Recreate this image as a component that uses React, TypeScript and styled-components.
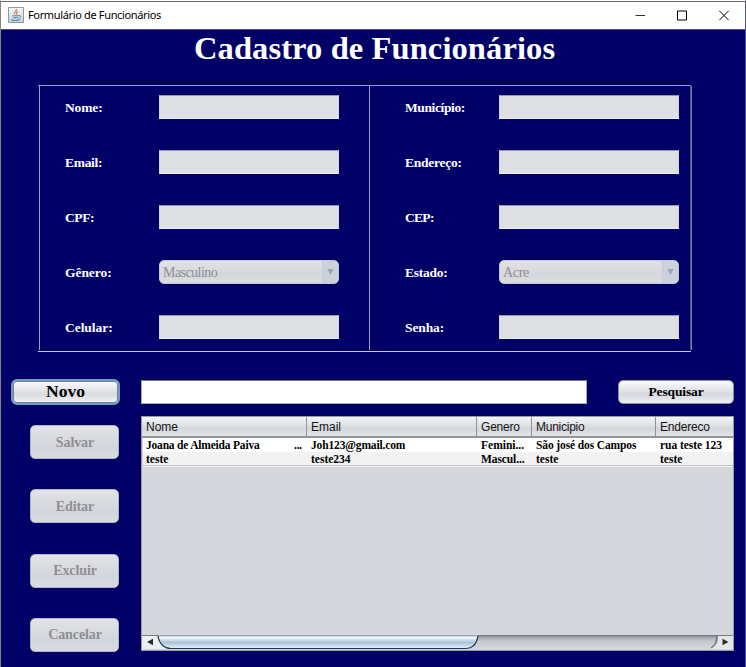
import React from "react";
import styled, { createGlobalStyle } from "styled-components";

const Global = createGlobalStyle`
  * { box-sizing: border-box; }
  body { margin: 0; background: #000066; overflow: hidden; }
`;

const serif = `"Liberation Serif", "Times New Roman", serif`;
const sans = `"Liberation Sans", Arial, sans-serif`;

const Window = styled.div`
  width: 746px;
  height: 667px;
  display: flex;
  flex-direction: column;
  background: #000066;
  border-left: 1px solid #85857f;
  border-right: 1px solid #55558c;
  border-top: 1px solid #fdfdfd;
  overflow: hidden;
`;

const TitleBar = styled.header`
  flex: none;
  height: 29px;
  display: flex;
  align-items: center;
  padding: 0 0 1px 7px;
  background: #fff;
  border-top: 1px solid #686868;
  border-bottom: 1px solid #505080;
`;

const Caption = styled.span`
  flex: 1;
  margin-left: 4px;
  font: 11px/16px "Noto Sans", sans-serif;
  letter-spacing: -0.35px;
  color: #000;
  white-space: nowrap;
`;

const WindowControls = styled.div`
  display: flex;
  width: 124px;
  height: 26px;
`;

const Heading = styled.h1`
  flex: none;
  margin: 0;
  height: 55px;
  padding-left: 193px;
  font: bold 32.5px/36px ${serif};
  letter-spacing: 0.1px;
  color: #fff;
  white-space: nowrap;
`;

const FormFrame = styled.section`
  flex: none;
  margin-left: 37px;
  width: 654px;
  height: 267px;
  display: flex;
  flex-direction: column;
`;

const Rule = styled.div<{ $color: string }>`
  flex: none;
  height: 1px;
  width: 653px;
  background: ${(p) => p.$color};
`;

const Columns = styled.div`
  display: flex;
  height: 265px;
  margin-left: 1px;
`;

const Column = styled.div<{ $width: number; $pad: number }>`
  width: ${(p) => p.$width}px;
  height: 264px;
  border-left: 1px solid #9c9cc0;
  padding: 9px 0 0 ${(p) => p.$pad}px;
  display: flex;
  flex-direction: column;
  gap: 31px;
`;

const EndRule = styled.div`
  width: 2px;
  height: 264px;
  background: linear-gradient(90deg, #50508a 50%, #7878a4 50%);
`;

const FieldRow = styled.label`
  display: grid;
  grid-template-columns: 94px 180px;
  height: 24px;
  align-items: center;
`;

const Label = styled.span<{ $spacing?: number }>`
  font: bold 13.5px/22px ${serif};
  padding-top: 2px;
  letter-spacing: ${(p) => p.$spacing ?? 0}px;
  color: #fff;
  white-space: nowrap;
`;

const Input = styled.input`
  width: 180px;
  height: 24px;
  margin: 0;
  padding: 0 5px;
  outline: 0;
  border: 1px solid #d2d3d9;
  border-top-color: #9698a5;
  border-bottom-color: #f0f0f2;
  border-radius: 0;
  background: #dedfe3;
`;

const Combo = styled.div`
  width: 180px;
  height: 24px;
  display: flex;
  border: 1px solid #c6c8d0;
  border-radius: 5px;
  background: linear-gradient(#e2e3e7, #d5d7dc 60%, #dcdde1);
  overflow: hidden;
  font: 14px/23px ${serif};
  color: #8e8f94;
`;

const ComboValue = styled.span<{ $spacing: number }>`
  flex: 1;
  padding-left: 3px;
  letter-spacing: ${(p) => p.$spacing}px;
`;

const ComboArrow = styled.span`
  width: 16px;
  display: flex;
  align-items: center;
  justify-content: center;
  background: #ccd2dd;
  border-left: 1px solid #c7cbd5;
`;

const Lower = styled.main`
  display: grid;
  grid-template-columns: 109px 593px;
  column-gap: 21px;
  padding: 27px 0 0 10px;
`;

const Actions = styled.nav`
  display: flex;
  flex-direction: column;
  align-items: flex-end;
`;

const Button = styled.button`
  height: 34px;
  width: 89px;
  margin: 0 1px 30.25px 0;
  padding: 1px 0 0 1px;
  border: 1px solid #b4b7c0;
  border-radius: 5px;
  background: linear-gradient(#e2e3e7, #d5d6dc 65%, #dadbe0);
  font: bold 14px/30px ${serif};
  letter-spacing: -0.1px;
  color: #8e8f94;
`;

const NewButton = styled(Button)`
  width: 109px;
  height: 26px;
  margin: 0 0 20px;
  padding: 0 0 2px;
  border: 2px solid #6e9cc4;
  border-radius: 6px;
  background: linear-gradient(#fafafb, #e6e7ea 40%, #d8dae0 60%, #f2f3f5);
  box-shadow: inset 0 0 0 1px #7c8190;
  font: bold 17.5px/20px ${serif};
  letter-spacing: 0;
  color: #000;
`;

const SearchButton = styled(Button)`
  width: 116px;
  height: 24px;
  margin: 0;
  padding: 0;
  border-color: #8f919b;
  background: linear-gradient(#fafafb, #e4e5e9 40%, #d6d8df 60%, #eff0f3);
  font: bold 13.5px/22px ${serif};
  letter-spacing: -0.12px;
  color: #000;
`;

const SearchBar = styled.div`
  display: flex;
  justify-content: space-between;
  margin: 1px 0 12px;
`;

const SearchInput = styled(Input)`
  width: 446px;
  background: #fff;
  border-color: #a9aab4;
  border-top-color: #707080;
`;

const TablePane = styled.div`
  width: 593px;
  height: 235px;
  border: 1px solid #9799a5;
  background: #d6d7dc;
  display: flex;
  flex-direction: column;
`;

const tracks = "165px 170px 55px 124px 77px";

const HeaderRow = styled.div`
  flex: none;
  display: grid;
  grid-template-columns: ${tracks};
  height: 21px;
  background: linear-gradient(#f4f5f7, #dfe0e4 45%, #d5d6db 60%, #e3e4e8);
  border-bottom: 2px solid #9295a0;
`;

const HeaderCell = styled.div<{ $last?: boolean; $spacing: number }>`
  padding-left: 4px;
  font: 12px/20px ${sans};
  letter-spacing: ${(p) => p.$spacing}px;
  color: #141414;
  border-right: ${(p) => (p.$last ? "0" : "1px solid #8e909c")};
  white-space: nowrap;
`;

const DataRow = styled.div<{ $alt?: boolean }>`
  flex: none;
  display: grid;
  grid-template-columns: ${tracks};
  height: ${(p) => (p.$alt ? 13 : 14)}px;
  margin-left: 1px;
  background: ${(p) => (p.$alt ? "#f2f2f2" : "#fff")};
`;

const Cell = styled.div<{ $spacing?: number }>`
  display: flex;
  justify-content: space-between;
  padding: 0 6px 0 3px;
  font: bold 11.5px/14px ${serif};
  letter-spacing: ${(p) => p.$spacing ?? 0}px;
  color: #000;
  white-space: pre;
`;

const TableEnd = styled.div`
  height: 2px;
  background: linear-gradient(#c2c3c8 50%, #f5f5f7 50%);
`;

const ScrollBar = styled.div`
  margin-top: auto;
  height: 15px;
  display: flex;
  background: linear-gradient(#6c6e77, #a6a7ae 15%, #c6c7cc 40%, #d8d9de);
`;

const fields: [string, string, number][][] = [
  [["Nome:", "", -0.15], ["Email:", "", -0.3], ["CPF:", "", -0.4], ["Gênero:", "Masculino", -0.05], ["Celular:", "", -0.05]],
  [["Município:", "", -0.38], ["Endereço:", "", -0.25], ["CEP:", "", -0.7], ["Estado:", "Acre", -0.25], ["Senha:", "", -0.1]],
];

const headers: [string, number][] = [
  ["Nome", 0],
  ["Email", 0],
  ["Genero", -0.2],
  ["Municipio", -0.25],
  ["Endereco", -0.2],
];

const JavaIcon = () => (
  <svg width="16" height="16" viewBox="0 0 16 16" fill="none">
    <defs>
      <linearGradient id="tile" x1="0" y1="0" x2="0" y2="1">
        <stop stopColor="#f6f8fa" />
        <stop offset="1" stopColor="#c3d0dc" />
      </linearGradient>
    </defs>
    <path d="M.5.5h15v15H.5z" fill="url(#tile)" stroke="#8c9aa8" />
    <path d="M8.3 2c1.2 2.2-3 2.5-1.6 5M9.8 4.2C7.8 5.2 9.4 6.2 8.3 7.6" stroke="#e07830" strokeWidth="1.2" />
    <path d="M4.500 8.800h6M5.200 10.800h4.600M3.200 12.800c2 1 6.500.9 9-.4M10.600 8.600c2.600-.7 2.600 1.700.2 2.200" stroke="#4d7da7" />
  </svg>
);

export default function App() {
  return (
    <>
      <Global />
      <Window>
        <TitleBar>
          <JavaIcon />
          <Caption>Formulário de Funcionários</Caption>
          <WindowControls>
            <svg width="124" height="26" fill="none" stroke="#000">
              <path d="M14.500 13.500h9.500" stroke="#333" />
              <path d="M56.500 9h9v9h-9z" />
              <path d="M98.300 8.800l9.400 9.400M107.700 8.800l-9.400 9.400" />
            </svg>
          </WindowControls>
        </TitleBar>
        <Heading>Cadastro de Funcionários</Heading>
        <FormFrame>
          <Rule $color="#9c9cb8" />
          <Columns>
            {fields.map((column, i) => (
              <Column key={i} $width={i ? 321 : 330} $pad={i ? 35 : 25}>
                {column.map(([label, value, spacing]) => (
                  <FieldRow key={label}>
                    <Label $spacing={spacing}>{label}</Label>
                    {value ? (
                      <Combo>
                        <ComboValue $spacing={value === "Acre" ? -0.3 : -0.55}>{value}</ComboValue>
                        <ComboArrow>
                          <svg width="7" height="6" fill="#9ea4b0">
                            <path d="M.3 0h6.4L3.5 6z" />
                          </svg>
                        </ComboArrow>
                      </Combo>
                    ) : (
                      <Input disabled />
                    )}
                  </FieldRow>
                ))}
              </Column>
            ))}
            <EndRule />
          </Columns>
          <Rule $color="#c8c8d8" />
        </FormFrame>
        <Lower>
          <Actions>
            <NewButton>Novo</NewButton>
            <Button disabled>Salvar</Button>
            <Button disabled>Editar</Button>
            <Button disabled>Excluir</Button>
            <Button disabled>Cancelar</Button>
          </Actions>
          <div>
            <SearchBar>
              <SearchInput />
              <SearchButton>Pesquisar</SearchButton>
            </SearchBar>
            <TablePane>
              <HeaderRow>
                {headers.map(([name, spacing], i) => (
                  <HeaderCell key={name} $last={i === 4} $spacing={spacing}>{name}</HeaderCell>
                ))}
              </HeaderRow>
              <DataRow>
                <Cell $spacing={-0.2}><span>Joana de Almeida Paiva</span><span>...</span></Cell>
                <Cell $spacing={-0.15}>Joh123@gmail.com</Cell>
                <Cell>Femini...</Cell>
                <Cell $spacing={-0.12}>São josé dos Campos</Cell>
                <Cell $spacing={-0.05}>rua teste 123</Cell>
              </DataRow>
              <DataRow $alt>
                <Cell>teste</Cell>
                <Cell>teste234</Cell>
                <Cell $spacing={-0.1}>Mascul...</Cell>
                <Cell>teste</Cell>
                <Cell>teste</Cell>
              </DataRow>
              <TableEnd />
              <ScrollBar>
                <svg width="591" height="15" fill="none">
                  <defs>
                    <linearGradient id="thumb" x1="0" y1="0" x2="0" y2="1">
                      <stop stopColor="#9fb3c5" />
                      <stop offset=".15" stopColor="#f3f8fb" />
                      <stop offset=".4" stopColor="#c4d6e4" />
                      <stop offset=".55" stopColor="#a9c3d7" />
                      <stop offset="1" stopColor="#e6f7ff" />
                    </linearGradient>
                  </defs>
                  <path d="M0 1h17c1 7 5 12 12 13H0z" fill="#eceef0" />
                  <path d="M591 1h-15c0 7-2 11-7 13h22z" fill="#e6e7ea" />
                  <path d="M575 1c0 7-2 9-6 12" stroke="#70737c" strokeWidth="1.5" />
                  <path d="M16 .5h320c-1 8-5 13-13 13H29c-7 0-12-5-13-13z" fill="url(#thumb)" />
                  <path d="M16 .5c1 8 6 13 13 13h294c8 0 12-5 13-13" stroke="#1c3648" strokeWidth="1.2" />
                  <path d="M16 .5h320" stroke="#9aa9b7" />
                  <path d="M5 7l6-3.300v6.600zM586.500 7l-6-3.300v6.600z" fill="#2c2c30" />
                </svg>
              </ScrollBar>
            </TablePane>
          </div>
        </Lower>
      </Window>
    </>
  );
}
